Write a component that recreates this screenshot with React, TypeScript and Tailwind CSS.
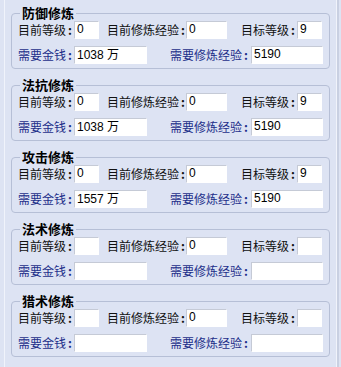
const sections = [
  { title: "防御修炼", level: "0", exp: "0", target: "9", money: "1038 万", need: "5190" },
  { title: "法抗修炼", level: "0", exp: "0", target: "9", money: "1038 万", need: "5190" },
  { title: "攻击修炼", level: "0", exp: "0", target: "9", money: "1557 万", need: "5190" },
  { title: "法术修炼", level: "", exp: "0", target: "", money: "", need: "" },
  { title: "猎术修炼", level: "", exp: "0", target: "", money: "", need: "" },
];

const cjk = "font-['Noto_Sans_CJK_SC',sans-serif]";

function Field({ value, width }: { value: string; width: string }) {
  return (
    <input
      readOnly
      value={value}
      className={`${width} h-[18px] bg-white border border-white border-t-[#c5cad6] border-l-[#c5cad6] pl-[2px] pb-[3px] text-[12px] leading-none text-black outline-none font-['Liberation_Sans','Noto_Sans_CJK_SC',sans-serif]`}
    />
  );
}

function Label({ text, width, blue }: { text: string; width: string; blue?: boolean }) {
  return (
    <span className={`${width} shrink-0 text-[12px] leading-[18px] whitespace-nowrap ${blue ? "text-[#1d2f8a]" : "text-[#111]"} ${cjk}`}>
      {text}
      <b className="ml-[2px]">:</b>
    </span>
  );
}

export default function App() {
  return (
    <div className="w-[341px] h-[367px] overflow-hidden bg-[#dde3f3] flex">
      <div className="w-[4px] shrink-0" />
      <div className="w-[333px] shrink-0 border-l border-r border-[#f0f3fb] flex flex-col gap-[8px] pt-[5px] px-[6px]">
        {sections.map((s) => (
          <fieldset
            key={s.title}
            className="border border-[#b6bfd6] rounded-[4px] pl-[6px] pr-[6px] pb-[4px] m-0"
          >
            <legend className={`px-[2px] ml-[2px] text-[13px] leading-[16px] font-bold text-black ${cjk}`}>
              {s.title}
            </legend>
            <div className="flex items-center">
              <Label text="目前等级" width="w-[56px]" />
              <Field value={s.level} width="w-[25px]" />
              <div className="w-[8px]" />
              <Label text="目前修炼经验" width="w-[79px]" />
              <Field value={s.exp} width="w-[41px]" />
              <div className="w-[14px]" />
              <Label text="目标等级" width="w-[56px]" />
              <Field value={s.target} width="w-[25px]" />
            </div>
            <div className="flex items-center mt-[7px]">
              <Label text="需要金钱" width="w-[56px]" blue />
              <Field value={s.money} width="w-[73px]" />
              <div className="w-[23px]" />
              <Label text="需要修炼经验" width="w-[81px]" blue />
              <Field value={s.need} width="w-[72px]" />
            </div>
          </fieldset>
        ))}
      </div>
      <div className="w-[2px] shrink-0 bg-[#c9d0e2]" />
    </div>
  );
}
